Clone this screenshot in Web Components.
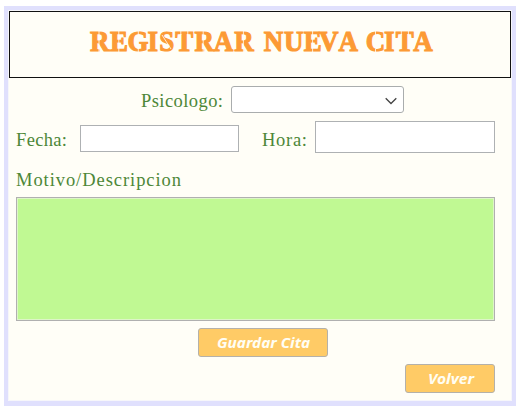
<!DOCTYPE html>
<html lang="es"><head><meta charset="utf-8"><title>Registrar nueva cita</title>
<style>body{margin:0;background:#fff;width:521px;height:412px;overflow:hidden}</style></head><body>
<cita-window>
<cita-header slot="header"></cita-header>
<cita-row style="padding:8px 0 0 125px;height:27px"><cita-label style="width:90px" w="82">Psicologo:</cita-label><cita-select></cita-select></cita-row>
<cita-row style="padding-top:9px;height:33px"><cita-label style="width:64px" w="51">Fecha:</cita-label><cita-field style="width:159px;height:27px"></cita-field><cita-label style="width:53px;margin-left:23px" w="45">Hora:</cita-label><cita-field style="width:180px;height:32px;margin-top:-3px"></cita-field></cita-row>
<cita-row style="padding-top:5px;height:37px"><cita-label w="165">Motivo/Descripcion</cita-label></cita-row>
<cita-area></cita-area>
<cita-row style="padding:7px 0 0 182px;height:29px"><cita-button style="width:130px" w="93">Guardar Cita</cita-button></cita-row>
<cita-row style="padding:7px 0 0 389px;height:29px"><cita-button style="width:90px" w="46" dx="1">Volver</cita-button></cita-row>
</cita-window>
<script>
const def=(n,html,after)=>customElements.define(n,class extends HTMLElement{constructor(){super();this.attachShadow({mode:'open'}).innerHTML=html;}connectedCallback(){if(after)after(this)}});
const label=(e)=>{const t=e.shadowRoot.querySelector('text');t.textContent=e.textContent;t.setAttribute('textLength',e.getAttribute('w'));t.setAttribute('x',e.getAttribute('dx')||0);};
def('cita-window',`<style>:host{display:block;box-sizing:border-box;margin:6px 0 0 4px;width:512px;height:400px;background:#fffef7;border:4px solid #e0e0fd;border-bottom-width:5px;padding:1px;box-shadow:inset 0 0 0 1px #f6f6fa}main{width:479px;padding:0 7px}</style><slot name="header"></slot><main><slot></slot></main>`);
/* Title letters have fixed x positions; the bridge lines cut the stencil gaps. */
def('cita-header',`<style>:host{display:block;box-sizing:border-box;height:67px;border:1px solid #111}svg{display:block}text{font:bold 26.5px "Liberation Serif",serif;font-size:30px;fill:#fc9a35;stroke:#fc9a35;stroke-width:1.1}path{fill:none;stroke:#fffef7;stroke-width:.8}</style><svg width="500" height="65" viewBox="10 12 500 65"><text transform="scale(.9 1)" y="51.5" x="100 122.3 141.7 164 177 194.6 216 237.5 260.4 280 293 315.5 337.5 354.5 376 395 406.3 426.7 439.6 459.2">REGISTRAR NUEVA CITA</text>
<path d="M99 31V53M118.8 31V53M138.3 31V35M138.3 49V53M162 35L171 49M180.8 31V35M187.8 31V35M203.2 31V53M243.4 31V53M312.6 31V53M375.5 31V35M375.5 49V53M401.3 31V35M408.4 31V35"/></svg>`);
def('cita-row',`<style>:host{display:flex;box-sizing:content-box;align-items:center}</style><slot></slot>`);
def('cita-label',`<style>:host{display:block}svg{display:block;overflow:visible}text{font:18.5px "Liberation Serif",serif;fill:#4d8738}</style><svg width="1" height="24"><text y="19" lengthAdjust="spacing"></text></svg>`,label);
def('cita-field',`<style>:host{display:block;box-sizing:border-box;background:#fff;border:1px solid #aeb1b3}</style>`);
def('cita-select',`<style>:host{display:flex;box-sizing:border-box;width:173px;height:27px;background:#fff;border:1px solid #aaadae;border-radius:3px;align-items:center;justify-content:flex-end;padding:2px 6px 0 0}</style><svg width="12" height="8" fill="none" stroke="#444" stroke-width="1.3"><path d="M.7 1.2L6 6.5 11.3 1.2"/></svg>`);
def('cita-area',`<style>:host{display:block;box-sizing:border-box;height:124px;background:#c0f993;border:1px solid #b0b0b0;box-shadow:inset 0 0 0 1px #def5c8}</style>`);
def('cita-button',`<style>:host{display:flex;box-sizing:border-box;height:29px;background:#ffcb66;border:1px solid #b4b1aa;border-radius:3px;justify-content:center;align-items:center}svg{overflow:visible}text{font:italic bold 15px "Noto Sans","Open Sans",sans-serif;fill:#fffef4}</style><svg height="20"><text y="15" lengthAdjust="spacingAndGlyphs"></text></svg>`,e=>{label(e);e.shadowRoot.querySelector('svg').setAttribute('width',e.getAttribute('w'))});
</script></body></html>
